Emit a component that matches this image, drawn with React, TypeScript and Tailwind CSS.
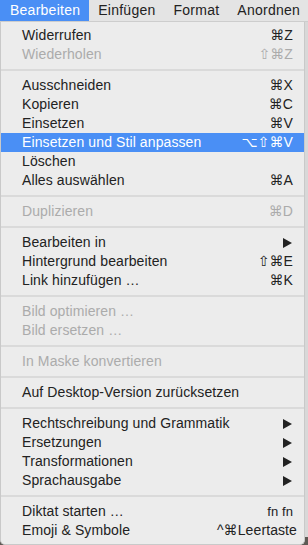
import React from "react";

type Item =
  | { kind: "sep" }
  | {
      kind: "item";
      label: string;
      shortcut?: string;
      disabled?: boolean;
      active?: boolean;
      submenu?: boolean;
      small?: boolean;
    };

const items: Item[] = [
  { kind: "item", label: "Widerrufen", shortcut: "⌘Z" },
  { kind: "item", label: "Wiederholen", shortcut: "⇧⌘Z", disabled: true },
  { kind: "sep" },
  { kind: "item", label: "Ausschneiden", shortcut: "⌘X" },
  { kind: "item", label: "Kopieren", shortcut: "⌘C" },
  { kind: "item", label: "Einsetzen", shortcut: "⌘V" },
  { kind: "item", label: "Einsetzen und Stil anpassen", shortcut: "⌥⇧⌘V", active: true },
  { kind: "item", label: "Löschen" },
  { kind: "item", label: "Alles auswählen", shortcut: "⌘A" },
  { kind: "sep" },
  { kind: "item", label: "Duplizieren", shortcut: "⌘D", disabled: true },
  { kind: "sep" },
  { kind: "item", label: "Bearbeiten in", submenu: true },
  { kind: "item", label: "Hintergrund bearbeiten", shortcut: "⇧⌘E" },
  { kind: "item", label: "Link hinzufügen …", shortcut: "⌘K" },
  { kind: "sep" },
  { kind: "item", label: "Bild optimieren …", disabled: true },
  { kind: "item", label: "Bild ersetzen …", disabled: true },
  { kind: "sep" },
  { kind: "item", label: "In Maske konvertieren", disabled: true },
  { kind: "sep" },
  { kind: "item", label: "Auf Desktop-Version zurücksetzen" },
  { kind: "sep" },
  { kind: "item", label: "Rechtschreibung und Grammatik", submenu: true },
  { kind: "item", label: "Ersetzungen", submenu: true },
  { kind: "item", label: "Transformationen", submenu: true },
  { kind: "item", label: "Sprachausgabe", submenu: true },
  { kind: "sep" },
  { kind: "item", label: "Diktat starten …", shortcut: "fn fn", small: true },
  { kind: "item", label: "Emoji & Symbole", shortcut: "^⌘Leertaste" },
];

function Arrow({ color }: { color: string }) {
  return (
    <svg width="9" height="10" viewBox="0 0 9 10">
      <polygon points="0,0 9,5 0,10" fill={color} />
    </svg>
  );
}

export default function App() {
  return (
    <div className="w-[308px] h-[545px] bg-[#5e5a55] overflow-hidden font-['Liberation_Sans',_'DejaVu_Sans',_sans-serif] text-[14px] text-[#222]">
      <div className="h-[22px] flex items-stretch bg-[#e4e4e4] border-b border-[#cdcdcd] tracking-[0.25px]">
        <div className="px-[9px] pl-[10px] flex items-center bg-[#4a8ff5] text-white">Bearbeiten</div>
        <div className="px-[9px] flex items-center">Einfügen</div>
        <div className="px-[9px] flex items-center">Format</div>
        <div className="px-[9px] flex items-center">Anordnen</div>
      </div>
      <div className="flex">
        <div className="w-[305px] bg-[#ececec] rounded-b-[5px] py-[4px] border-x border-b border-[#c9c9c9] tracking-[0.1px]">
          {items.map((it, i) =>
            it.kind === "sep" ? (
              <div key={i} className="h-[12px] flex items-center">
                <div className="h-[2px] w-full bg-[#dadada]" />
              </div>
            ) : (
              <div
                key={i}
                className={
                  "h-[19px] flex items-center justify-between pl-[21px] pr-[11px] " +
                  (it.active ? "bg-[#4a8ff5] text-white" : it.disabled ? "text-[#ababab]" : "text-[#222]")
                }
              >
                <span>{it.label}</span>
                {it.shortcut ? (
                  <span className={it.small ? "text-[13px]" : it.shortcut.includes("Leertaste") ? "mr-[-4px]" : ""}>
                    {it.shortcut}
                  </span>
                ) : it.submenu ? (
                  <span className="pr-[1px]">
                    <Arrow color="#222" />
                  </span>
                ) : null}
              </div>
            )
          )}
        </div>
        <div className="flex-1 h-[515px] bg-[#d8d8d8]" />
      </div>
    </div>
  );
}
